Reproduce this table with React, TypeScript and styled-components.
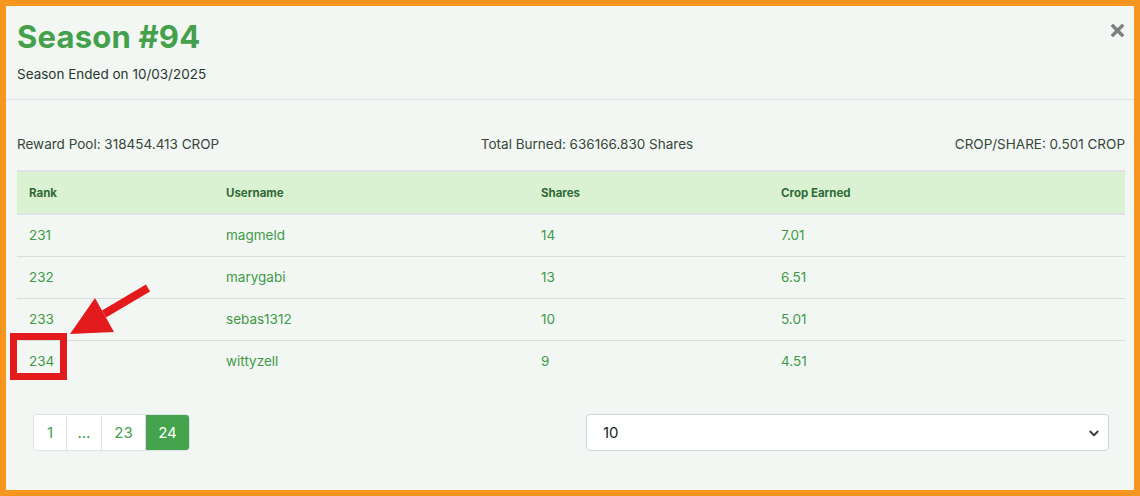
import React from 'react';
import styled, {createGlobalStyle} from 'styled-components';

const Global = createGlobalStyle`
  html, body {
    margin: 0;
    padding: 0;
    background: #f7961f;
  }
  * { box-sizing: border-box; }
`

const Frame = styled.div`
  position: relative;
  width: 1140px;
  height: 496px;
  padding: 6px;
  background: #f7961f;
  font-family: Inter, "Noto Sans", sans-serif;
`

const Modal = styled.div`
  height: 100%;
  background: #f2f7f3;
  display: flex;
  flex-direction: column;
`

const Header = styled.div`
  display: flex;
  justify-content: space-between;
  align-items: flex-start;
  padding: 12px 10px 17px 11px;
  border-bottom: 1px solid #dde1ea;
`

const Title = styled.h1`
  margin: 0;
  font-size: 31px;
  line-height: 38px;
  font-weight: 700;
  color: #44a04b;
  letter-spacing: 0.2px;
`

const Subtitle = styled.div`
  margin-top: 10px;
  font-size: 13.5px;
  color: #28372c;
`

const Close = styled.button`
  border: 0;
  background: none;
  padding: 0;
  margin-top: 6px;
  width: 13px;
  height: 13px;
  cursor: pointer;
`

const Body = styled.div`
  padding: 35px 9px 0 11px;
`

const Stats = styled.div`
  display: flex;
  justify-content: space-between;
  font-size: 13.5px;
  color: #37463a;
  height: 18px;
  line-height: 18px;
  margin-bottom: 17px;
`

const Stat = styled.span``

const Table = styled.table`
  width: 1108px;
  border-collapse: collapse;
  font-size: 13.5px;
`

const HeadRow = styled.tr`
  background: #dbf2d2;
  border-top: 2px solid #dee2e6;
  border-bottom: 2px solid #dee2e6;
`

const Th = styled.th<{ w: number }>`
  width: ${p => p.w}px;
  text-align: left;
  padding: 0 12px;
  height: 43px;
  font-size: 11.5px;
  font-weight: 700;
  color: #2f6a36;
`

const Row = styled.tr`
  border-bottom: 1px solid #d6dfda;
  &:last-child { border-bottom: 0; }
`

const Td = styled.td`
  padding: 0 12px;
  height: 42px;
  color: #3f9a47;
`

const Footer = styled.div`
  display: flex;
  justify-content: space-between;
  align-items: center;
  padding: 32px 16px 0 16px;
`

const Pager = styled.div`
  display: flex;
  border: 1px solid #dee2e6;
  border-radius: 4px;
  overflow: hidden;
  background: #fff;
`

const PageItem = styled.span<{ active?: boolean; w: number }>`
  width: ${p => p.w}px;
  height: 35px;
  display: flex;
  align-items: center;
  justify-content: center;
  font-size: 15px;
  color: ${p => p.active ? '#fff' : '#44a04b'};
  background: ${p => p.active ? '#44a34c' : '#fff'};
  border-left: 1px solid #dee2e6;
  &:first-child { border-left: 0; }
`

const Select = styled.div`
  width: 523px;
  height: 37px;
  background: #fff;
  border: 1px solid #ced4da;
  border-radius: 4px;
  display: flex;
  align-items: center;
  justify-content: space-between;
  padding: 0 8px 0 16px;
  font-size: 15px;
  color: #212529;
`

const Highlight = styled.div`
  position: absolute;
  left: 10px;
  top: 333px;
  width: 57px;
  height: 47px;
  border: 7px solid #e31b1d;
`

const Arrow = styled.svg`
  position: absolute;
  left: 60px;
  top: 280px;
`

const rows = [
    {rank: 231, user: 'magmeld', shares: 14, crop: '7.01'},
    {rank: 232, user: 'marygabi', shares: 13, crop: '6.51'},
    {rank: 233, user: 'sebas1312', shares: 10, crop: '5.01'},
    {rank: 234, user: 'wittyzell', shares: 9, crop: '4.51'},
]

export default function App() {
    return (
        <Frame>
            <Global/>
            <Modal>
                <Header>
                    <div>
                        <Title>Season #94</Title>
                        <Subtitle>Season Ended on 10/03/2025</Subtitle>
                    </div>
                    <Close aria-label="close">
                        <svg width="13" height="13" viewBox="0 0 13 13">
                            <path d="M2 2 L11 11 M11 2 L2 11" stroke="#808080" strokeWidth="3.4" strokeLinecap="square"/>
                        </svg>
                    </Close>
                </Header>
                <Body>
                    <Stats>
                        <Stat>Reward Pool: 318454.413 CROP</Stat>
                        <Stat>Total Burned: 636166.830 Shares</Stat>
                        <Stat>CROP/SHARE: 0.501 CROP</Stat>
                    </Stats>
                    <Table>
                        <thead>
                        <HeadRow>
                            <Th w={197}>Rank</Th>
                            <Th w={315}>Username</Th>
                            <Th w={240}>Shares</Th>
                            <Th w={356}>Crop Earned</Th>
                        </HeadRow>
                        </thead>
                        <tbody>
                        {rows.map(r => (
                            <Row key={r.rank}>
                                <Td>{r.rank}</Td>
                                <Td>{r.user}</Td>
                                <Td>{r.shares}</Td>
                                <Td>{r.crop}</Td>
                            </Row>
                        ))}
                        </tbody>
                    </Table>
                    <Footer>
                        <Pager>
                            <PageItem w={32}>1</PageItem>
                            <PageItem w={35}>…</PageItem>
                            <PageItem w={44}>23</PageItem>
                            <PageItem w={44} active>24</PageItem>
                        </Pager>
                        <Select>
                            <span>10</span>
                            <svg width="12" height="12" viewBox="0 0 16 16">
                                <path d="M3 6 L8 11 L13 6" fill="none" stroke="#343a40" strokeWidth="2.4"
                                      strokeLinecap="round" strokeLinejoin="round"/>
                            </svg>
                        </Select>
                    </Footer>
                </Body>
            </Modal>
            <Highlight/>
            <Arrow width="100" height="60" viewBox="0 0 100 60">
                <path d="M88 8 L44 34" stroke="#e31b1d" strokeWidth="8"/>
                <polygon points="10,54 35,18 54,52" fill="#e31b1d"/>
            </Arrow>
        </Frame>
    )
}
